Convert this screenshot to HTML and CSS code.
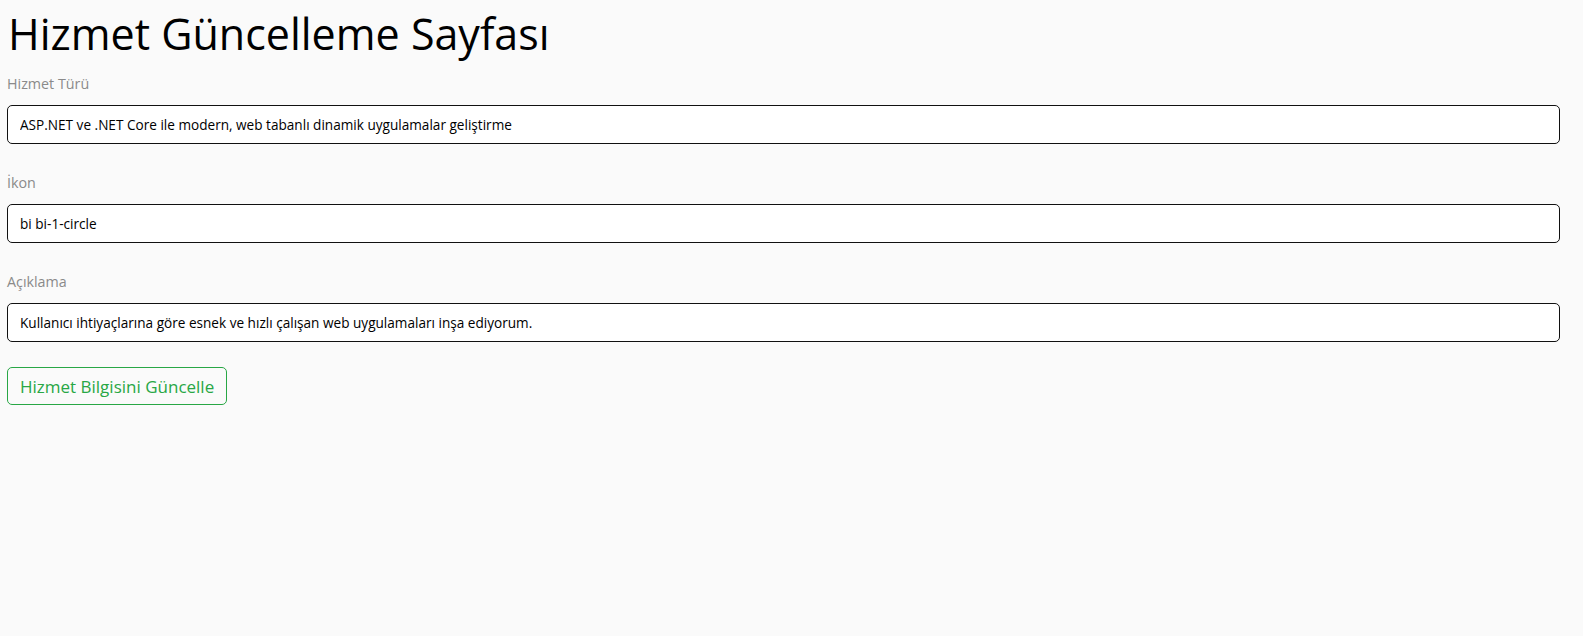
FILE: index.html
```html
<!DOCTYPE html>
<html lang="tr">
<head>
<meta charset="utf-8">
<title>Hizmet Güncelleme Sayfası</title>
<link rel="stylesheet" href="styles.css">
</head>
<body>
<main class="page">
  <h1 class="title">Hizmet Güncelleme Sayfası</h1>
  <form class="form">
    <div class="field">
      <label class="label">Hizmet Türü</label>
      <input class="control" type="text" value="ASP.NET ve .NET Core ile modern, web tabanlı dinamik uygulamalar geliştirme">
    </div>
    <div class="field">
      <label class="label">İkon</label>
      <input class="control" type="text" value="bi bi-1-circle">
    </div>
    <div class="field">
      <label class="label">Açıklama</label>
      <input class="control" type="text" value="Kullanıcı ihtiyaçlarına göre esnek ve hızlı çalışan web uygulamaları inşa ediyorum.">
    </div>
    <div class="actions">
      <button class="btn" type="button">Hizmet Bilgisini Güncelle</button>
    </div>
  </form>
</main>
</body>
</html>
```
FILE: styles.css
```css
html, body {
  margin: 0;
  padding: 0;
  background: #fafafa;
}
body {
  font-family: "Open Sans", "DejaVu Sans", sans-serif;
  color: #000;
}
.page {
  padding: 10px 23px 0 7px;
}
.title {
  margin: 0 0 16px 1px;
  font-size: 43px;
  line-height: 48px;
  font-weight: 400;
  color: #000;
}
.form {
  display: flex;
  flex-direction: column;
  gap: 29px;
}
.field {
  display: flex;
  flex-direction: column;
  gap: 11px;
}
.label {
  font-size: 14.3px;
  line-height: 20px;
  color: #8a8a8a;
}
.control {
  box-sizing: border-box;
  height: 39px;
  width: 100%;
  margin: 0;
  padding: 0 12px;
  border: 1px solid #111;
  border-radius: 5px;
  background: #fff;
  font-family: inherit;
  font-size: 13.6px;
  color: #000;
  outline: none;
}
.actions {
  margin-top: -4px;
}
.btn {
  box-sizing: border-box;
  height: 38px;
  padding: 0 12px;
  border: 1px solid #28a745;
  border-radius: 5px;
  background: transparent;
  color: #28a745;
  font-family: inherit;
  font-size: 17px;
  cursor: pointer;
}
```
